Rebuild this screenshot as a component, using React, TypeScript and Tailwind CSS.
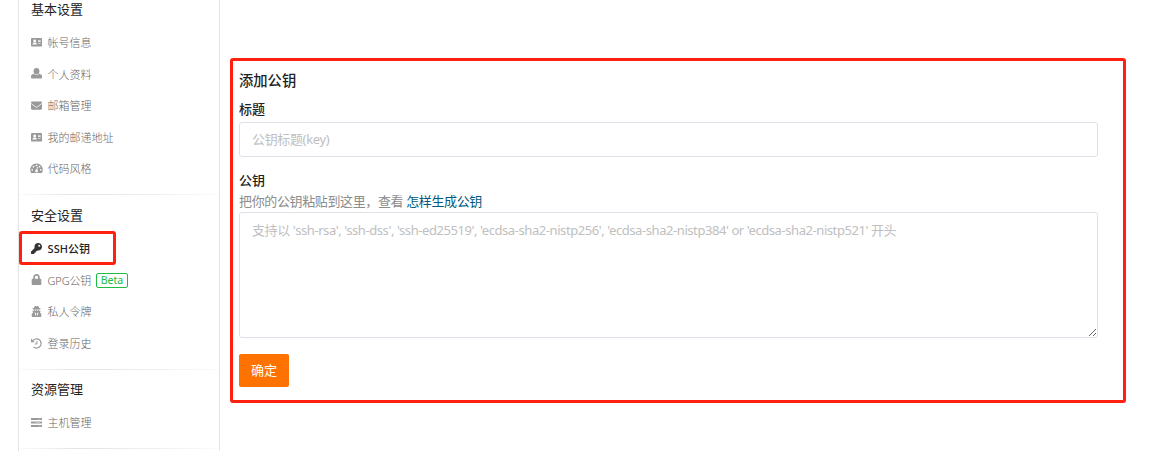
import type { ReactNode } from 'react';
import { FaEnvelope, FaKey, FaLock, FaUserSecret } from 'react-icons/fa';

type Item = { label: string; icon: ReactNode; active?: boolean; beta?: boolean };
type Section = { title: string; items: Item[] };

function CardIcon() {
  return (
    <svg width="11" height="11" viewBox="0 0 11 11" fill="currentColor">
      <rect y="1" width="11" height="8.5" rx="0.8" />
      <circle cx="3.7" cy="4" r="1.4" fill="#fff" />
      <path d="M1.5 7.6q0-2 1.3-2.2h1.8q1.3.2 1.3 2.2Z" fill="#fff" />
      <path d="M7 3.2h2.7v1.9H7ZM7 6h2.7v.8H7Z" fill="#fff" fillOpacity="0.8" />
    </svg>
  );
}

function UserIcon() {
  return (
    <svg width="11" height="11" viewBox="0 0 11 11" fill="currentColor">
      <ellipse cx="5.5" cy="3.2" rx="2.9" ry="3.2" />
      <path d="M2.6 5.7Q5.5 8.2 8.4 5.7L10 6.5q1 .6 1 2v1.1q0 1-1 1H1q-1 0-1-1V8.500q0-1.400 1-2Z" />
    </svg>
  );
}

function GaugeIcon() {
  return (
    <svg width="13" height="11" viewBox="0 0 13 11" className="shrink-0" fill="currentColor">
      <path d="M6.5 .5A6.2 6.2 0 0 0 1.2 10h10.6A6.2 6.2 0 0 0 6.5.5Z" />
      <g fill="#fff">
        <circle cx="2.2" cy="6.8" r="0.85" />
        <circle cx="3.5" cy="3.7" r="0.85" />
        <circle cx="6.5" cy="2.4" r="0.85" />
        <circle cx="9.6" cy="3.7" r="0.85" />
        <circle cx="10.8" cy="6.8" r="0.85" />
        <path d="M7.1 3.7l.8.2-.6 2.8a1.4 1.4 0 1 1-.9-.2Z" />
      </g>
    </svg>
  );
}

function HistoryIcon() {
  return (
    <svg width="11" height="11" viewBox="0 0 11 11" fill="none" stroke="currentColor" strokeWidth="1.2">
      <path d="M1.5 3.2A4.6 4.6 0 1 1 2.5 8.9" />
      <path d="M5.9 3v3H3.8" strokeWidth="1" />
      <path d="M0 .6v3.7h3.7Z" fill="currentColor" stroke="none" />
    </svg>
  );
}

function ServerIcon() {
  return (
    <svg width="11" height="11" viewBox="0 0 11 11" fill="currentColor">
      <path d="M0 1h11v2H0ZM0 4.500h11v2H0ZM0 8h11v2H0Z" />
      <path d="M7 1.700h2.500v.6H7ZM4.500 5.200h5v.6h-5ZM7.500 8.700h2v.6h-2Z" fill="#fff" fillOpacity="0.7" />
    </svg>
  );
}

const sections: Section[] = [
  {
    title: '基本设置',
    items: [
      { label: '帐号信息', icon: <CardIcon /> },
      { label: '个人资料', icon: <UserIcon /> },
      { label: '邮箱管理', icon: <FaEnvelope /> },
      { label: '我的邮递地址', icon: <CardIcon /> },
      { label: '代码风格', icon: <GaugeIcon /> },
    ],
  },
  {
    title: '安全设置',
    items: [
      { label: 'SSH公钥', icon: <FaKey />, active: true },
      { label: 'GPG公钥', icon: <FaLock />, beta: true },
      { label: '私人令牌', icon: <FaUserSecret /> },
      { label: '登录历史', icon: <HistoryIcon /> },
    ],
  },
  { title: '资源管理', items: [{ label: '主机管理', icon: <ServerIcon /> }] },
];

function Divider() {
  return <div className="mx-px h-px bg-linear-to-r from-[#fafafa] via-[#e2e3e5] via-30% to-[#fafafa]" />;
}

function MenuItem({ item }: { item: Item }) {
  return (
    <li
      className={`relative flex h-[31.6px] items-center pl-3 text-[11px] leading-4 ${
        item.active ? 'font-medium text-[#222]' : 'font-light text-[#666]'
      }`}
    >
      <span className={`flex w-[11px] justify-center pb-px ${item.active ? 'text-[#333]' : 'text-[#999]'}`}>
        {item.icon}
      </span>
      <span className={`ml-[5.6px] pt-[0.4px] ${item.beta ? 'tracking-[-0.2px]' : ''}`}>{item.label}</span>
      {item.beta && (
        <span className="ml-[5px] flex h-[15px] w-8 items-center justify-center rounded-[2px] border border-[#21ba45] text-[10.5px] font-normal text-[#21ba45]">
          Beta
        </span>
      )}
      {item.active && (
        <span className="absolute -top-[1.7px] left-0 h-[34px] w-[97px] rounded-[3px] border-3 border-[#ff2010]" />
      )}
    </li>
  );
}

export default function App() {
  return (
    <div className="flex h-[451px] w-[1176px] overflow-hidden bg-white font-['Noto_Sans','Noto_Sans_CJK_SC',sans-serif]">
      <aside className="ml-[18px] h-[470px] w-[202px] shrink-0 border-x border-[#e1e4e8]">
        <div className="-mt-[12px]">
          {sections.map((section, i) => (
            <section key={section.title}>
              {i > 0 && <Divider />}
              <h2
                className={`${
                  i === 0 ? 'mt-[10.7px]' : 'mt-[9.4px]'
                } mb-[7.3px] pl-3 text-[13px] leading-[21px] font-normal text-[#222]`}
              >
                {section.title}
              </h2>
              <ul className="mb-[9.4px]">
                {section.items.map((item) => (
                  <MenuItem key={item.label} item={item} />
                ))}
              </ul>
            </section>
          ))}
          <Divider />
        </div>
      </aside>

      <main className="mt-[58px] ml-[10px] h-[345px] w-[896px] shrink-0 rounded-[3px] border-3 border-[#ff2010] pt-[10px] pl-[6px]">
        <h1 className="text-[14.3px] leading-5 font-medium text-[#222]">添加公钥</h1>
        <form className="w-[859px]">
          <label className="mt-[9px] block text-[13px] leading-[18px] font-medium text-[#222]">标题</label>
          <input
            type="text"
            placeholder="公钥标题(key)"
            className="mt-1 block h-[35px] w-full rounded-[3px] border border-[#dfe1e8] px-3 pb-[2px] text-[13px] tracking-[-0.35px] outline-none placeholder:text-[#c0c0c0]"
          />
          <label className="mt-[14px] block text-[13px] leading-[18px] font-medium text-[#222]">公钥</label>
          <p className="mt-[3px] mb-px text-[13px] leading-[18px] tracking-[-0.37px] text-[#8c8c8c]">
            把你的公钥粘贴到这里，查看 <a className="text-[#005980]">怎样生成公钥</a>
          </p>
          <textarea
            placeholder="支持以 'ssh-rsa', 'ssh-dss', 'ssh-ed25519', 'ecdsa-sha2-nistp256', 'ecdsa-sha2-nistp384' or 'ecdsa-sha2-nistp521' 开头"
            className="mt-[2px] block h-[126px] w-full rounded-[3px] border border-[#dfe1e8] px-3 py-2 text-[13px] leading-[18px] tracking-[-0.425px] outline-none placeholder:text-[#c0c0c0]"
          />
          <button
            type="button"
            className="mt-4 block h-[33px] w-[50px] rounded-[2px] bg-[#fe7300] text-[13px] leading-[33px] text-white"
          >
            确定
          </button>
        </form>
      </main>
    </div>
  );
}
